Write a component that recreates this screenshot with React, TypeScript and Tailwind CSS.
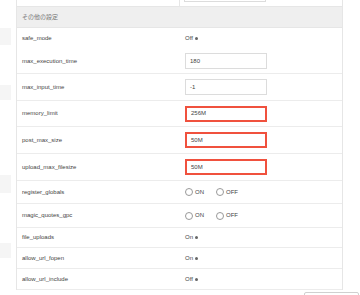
const font = { fontFamily: '"Liberation Sans", "Noto Sans CJK JP", sans-serif' };

function Dot() {
  return <span className="ml-[2px] inline-block h-[3px] w-[3px] rounded-full bg-[#666]" />;
}

function TextInput({ value, error }: { value: string; error?: boolean }) {
  return (
    <div
      className={
        "flex h-[16px] w-[82px] items-center pl-[4px] text-[6px] text-[#444] " +
        (error ? "border-2 border-[#f0513e]" : "border border-[#dcdcdc]")
      }
    >
      {value}
    </div>
  );
}

function Radio({ label }: { label: string }) {
  return (
    <span className="flex items-center">
      <span className="h-[8px] w-[8px] rounded-full border border-[#999] bg-white" />
      <span className="ml-[2px] text-[6px] text-[#444]">{label}</span>
    </span>
  );
}

type Row = {
  label: string;
  h: string;
  value: React.ReactNode;
  noBorder?: boolean;
};

const radios = (
  <span className="flex items-center gap-[12px]">
    <Radio label="ON" />
    <Radio label="OFF" />
  </span>
);

const rows: Row[] = [
  { label: "safe_mode", h: "h-[21px]", noBorder: true, value: <span className="flex items-center">Off<Dot /></span> },
  { label: "max_execution_time", h: "h-[25px]", value: <TextInput value="180" /> },
  { label: "max_input_time", h: "h-[27px]", value: <TextInput value="-1" /> },
  { label: "memory_limit", h: "h-[26px]", value: <TextInput value="256M" error /> },
  { label: "post_max_size", h: "h-[27px]", value: <TextInput value="50M" error /> },
  { label: "upload_max_filesize", h: "h-[27px]", value: <TextInput value="50M" error /> },
  { label: "register_globals", h: "h-[23px]", value: radios },
  { label: "magic_quotes_gpc", h: "h-[24px]", value: radios },
  { label: "file_uploads", h: "h-[20px]", value: <span className="flex items-center">On<Dot /></span> },
  { label: "allow_url_fopen", h: "h-[21px]", value: <span className="flex items-center">On<Dot /></span> },
  { label: "allow_url_include", h: "h-[21px]", value: <span className="flex items-center">Off<Dot /></span> },
];

export default function App() {
  return (
    <div className="flex h-[295px] w-[360px] overflow-hidden bg-white" style={font}>
      {/* faint sidebar remnants */}
      <div className="flex w-[16px] flex-col">
        <div className="h-[28px]" />
        <div className="h-[17px] w-[11px] bg-[#f5f5f5]" />
        <div className="h-[40px]" />
        <div className="h-[15px] w-[11px] bg-[#f5f5f5]" />
        <div className="h-[75px]" />
        <div className="h-[18px] w-[11px] bg-[#f5f5f5]" />
        <div className="h-[50px]" />
        <div className="h-[15px] w-[11px] bg-[#f5f5f5]" />
      </div>

      <div className="flex w-[344px] flex-col">
        <div className="w-[327px] border-x border-[#e6e6e6]">
          {/* tail of the previous section */}
          <div className="flex h-[7px] border-b border-[#e6e6e6]">
            <div className="w-[163px] border-r border-[#e6e6e6]" />
            <div className="pl-[4px]">
              <div className="h-[2px] w-[82px] border-x border-b border-[#dcdcdc]" />
            </div>
          </div>

          <div className="flex h-[21px] items-center border-b border-[#e6e6e6] bg-[#efefef] pl-[5px] text-[6px] text-[#777]">
            その他の設定
          </div>

          {rows.map((r) => (
            <div
              key={r.label}
              className={
                "flex items-center " + r.h + (r.noBorder ? "" : " border-b border-[#ececec]")
              }
            >
              <div className="w-[163px] pl-[5px] text-[6px] text-[#444]">{r.label}</div>
              <div className="pl-[5px] text-[6px] text-[#444]">{r.value}</div>
            </div>
          ))}
        </div>

        <div className="flex justify-end pr-[1px] pt-[2px]">
          <div className="h-[12px] w-[55px] rounded-t-[2px] border border-[#d0d0d0] bg-white" />
        </div>
      </div>
    </div>
  );
}
